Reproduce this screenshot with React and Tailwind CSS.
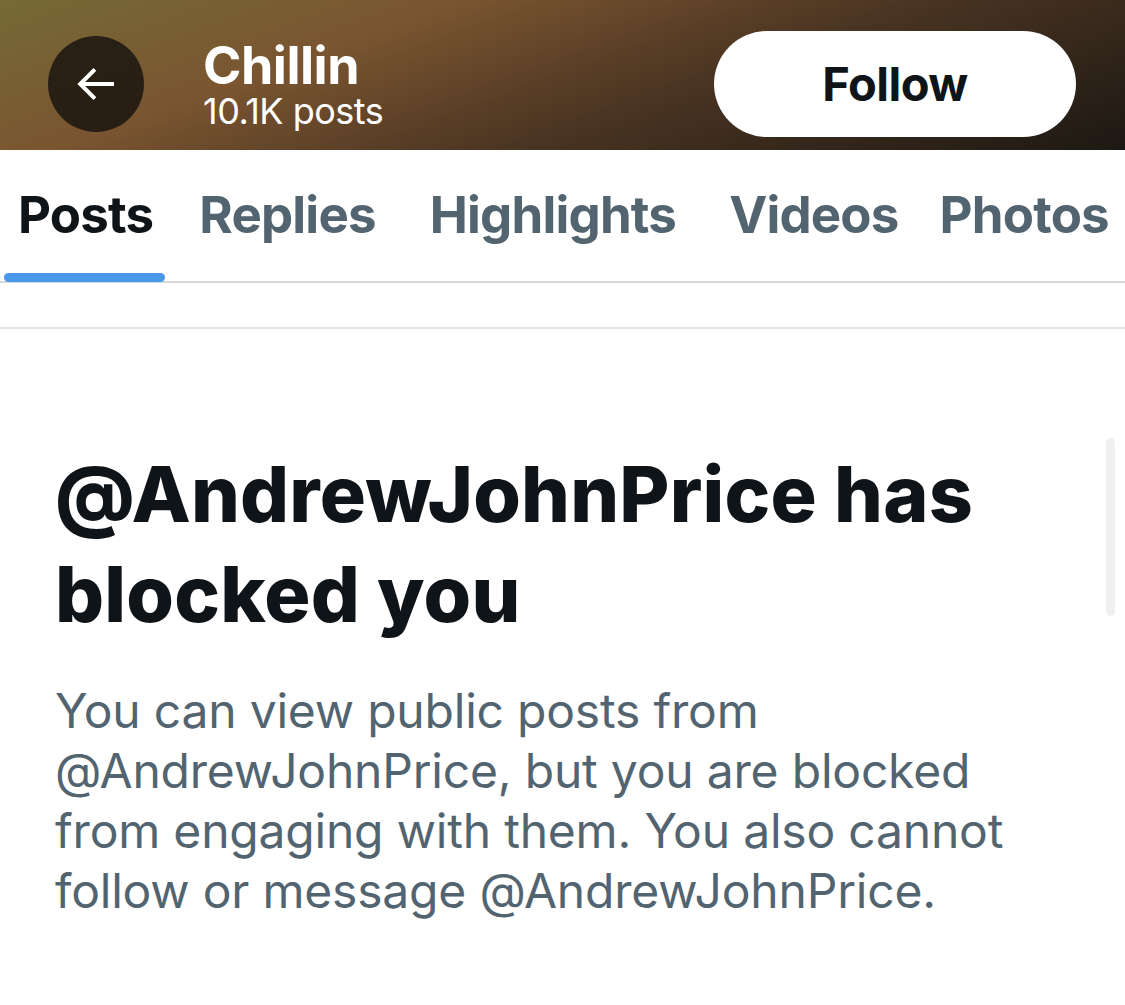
import React from 'react';

const tabs = [
  { label: 'Posts', cls: 'ml-[18px] text-[#0f1419]' },
  { label: 'Replies', cls: 'ml-[46px] text-[#536471]' },
  { label: 'Highlights', cls: 'ml-[54px] text-[#536471]' },
  { label: 'Videos', cls: 'ml-[53px] text-[#536471]' },
  { label: 'Photos', cls: 'ml-[41px] text-[#536471]' },
];

const App = () => {
  return (
    <div className="w-[1125px] h-[1005px] bg-white overflow-hidden relative font-['Inter',sans-serif]">
      {/* Header */}
      <div className="h-[150px] bg-[linear-gradient(160deg,#756a36_0%,#7a5530_30%,#4a3422_60%,#1c1813_100%)] flex items-center pt-[18px] pl-[48px] pr-[49px]">
        <button className="w-[96px] h-[96px] rounded-full bg-[#1f1812]/90 flex items-center justify-center">
          <svg width="54" height="54" viewBox="0 0 24 24" fill="none" stroke="white" strokeWidth="1.8" strokeLinecap="butt" strokeLinejoin="miter">
            <path d="M20 12H5M11.5 5.5L5 12l6.5 6.5" />
          </svg>
        </button>
        <div className="ml-[59px] flex flex-col mt-[0px]">
          <span className="text-white font-bold text-[52px] leading-[54px] tracking-[-0.5px]">Chillin</span>
          <span className="text-white text-[36px] leading-[36px] tracking-[-0.5px]">10.1K posts</span>
        </div>
        <button className="ml-auto w-[362px] h-[106px] rounded-full bg-white flex items-center justify-center text-[47px] font-bold text-[#0f1419] tracking-[-0.5px]">
          Follow
        </button>
      </div>

      {/* Tabs */}
      <div className="h-[133px] border-b-2 border-[#d4d8dc] flex items-center relative">
        {tabs.map((t) => (
          <span key={t.label} className={`text-[51px] font-bold tracking-[-0.8px] ${t.cls}`}>{t.label}</span>
        ))}
        <div className="absolute left-[4px] bottom-[-1px] w-[161px] h-[9px] rounded-full bg-[#4a99e9]" />
      </div>

      <div className="h-[46px] border-b-2 border-[#e2e5e8]" />

      {/* Blocked message */}
      <div className="pl-[55px] pr-[40px] pt-[115px]">
        <h1 className="text-[77px] font-extrabold leading-[100px] text-[#0f1419] tracking-[0.2px]">
          @AndrewJohnPrice has<br />blocked you
        </h1>
        <p className="mt-[37px] text-[48px] leading-[60px] text-[#536471] tracking-[-0.2px]">
          You can view public posts from<br />
          @AndrewJohnPrice, but you are blocked<br />
          from engaging with them. You also cannot<br />
          follow or message @AndrewJohnPrice.
        </p>
      </div>

      {/* Scrollbar */}
      <div className="absolute left-[1106px] top-[438px] w-[9px] h-[178px] rounded-full bg-[#f0f0f0]" />
    </div>
  );
};

export default App;
